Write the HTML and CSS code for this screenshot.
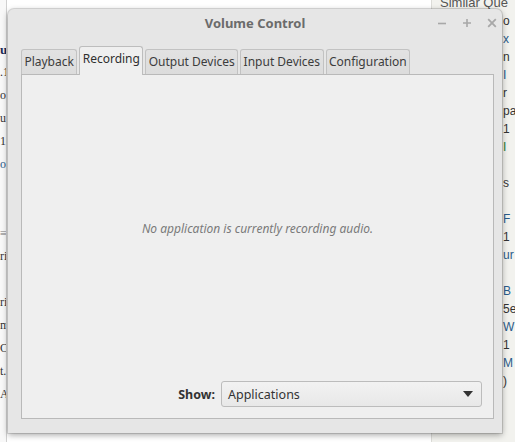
FILE: index.html
```html
<!DOCTYPE html>
<html>
<head>
<meta charset="utf-8">
<link rel="stylesheet" href="styles.css">
</head>
<body>
<div class="page">
  <div class="col-left">
    <div class="ln h">ur</div>
    <div class="ln">.1</div>
    <div class="ln">oi</div>
    <div class="ln">u:</div>
    <div class="ln">1</div>
    <div class="ln blue">ou</div>
    <div class="ln"> </div>
    <div class="ln"> </div>
    <div class="ln rule">≡</div>
    <div class="ln">ri</div>
    <div class="ln"> </div>
    <div class="ln">ri</div>
    <div class="ln">m</div>
    <div class="ln">C</div>
    <div class="ln">t.</div>
    <div class="ln">A</div>
  </div>
  <div class="col-mid"></div>
  <div class="col-right">
    <div class="rl top">Similar Que</div>
    <div class="rl">o</div>
    <div class="rl blue">x</div>
    <div class="rl">n</div>
    <div class="rl blue">I</div>
    <div class="rl">r</div>
    <div class="rl">pa</div>
    <div class="rl">1</div>
    <div class="rl green">I</div>
    <div class="rl"> </div>
    <div class="rl">s</div>
    <div class="rl"> </div>
    <div class="rl blue">F</div>
    <div class="rl">1</div>
    <div class="rl blue">ur</div>
    <div class="rl"> </div>
    <div class="rl blue">B</div>
    <div class="rl">5e</div>
    <div class="rl blue">W</div>
    <div class="rl">1</div>
    <div class="rl blue">M</div>
    <div class="rl">)</div>
  </div>
</div>

<div class="window">
  <div class="titlebar">
    <div class="title">Volume Control</div>
    <div class="controls">
      <svg width="12" height="12" viewBox="0 0 12 12"><path d="M2 6.5h8" stroke="#a8a8a8" stroke-width="1.6"/></svg>
      <svg width="12" height="12" viewBox="0 0 12 12"><path d="M2 6h8M6 2v8" stroke="#a8a8a8" stroke-width="1.6"/></svg>
      <svg width="12" height="12" viewBox="0 0 12 12"><path d="M2.2 2.2l7.6 7.6M9.8 2.2l-7.6 7.6" stroke="#a8a8a8" stroke-width="1.8"/></svg>
    </div>
  </div>
  <div class="notebook">
    <div class="tabs">
      <div class="tab">Playback</div>
      <div class="tab active">Recording</div>
      <div class="tab">Output Devices</div>
      <div class="tab">Input Devices</div>
      <div class="tab">Configuration</div>
    </div>
    <div class="panel">
      <div class="empty">No application is currently recording audio.</div>
      <div class="showrow">
        <span class="showlabel">Show:</span>
        <div class="combo">
          <span>Applications</span>
          <svg width="10" height="6" viewBox="0 0 10 6"><path d="M0 0h10L5 6z" fill="#333"/></svg>
        </div>
      </div>
    </div>
  </div>
</div>
</body>
</html>
```

FILE: styles.css
```css
html, body {
  margin: 0;
  padding: 0;
}
body {
  width: 515px;
  height: 442px;
  overflow: hidden;
  position: relative;
  background: #f4f4f2;
  font-family: "Noto Sans", "DejaVu Sans", sans-serif;
}
.page {
  display: flex;
  height: 442px;
}
.col-left {
  width: 6px;
  background: #f8f8f8;
  border-right: 1px solid #d0d0d0;
  overflow: hidden;
  padding-top: 38px;
  font-family: "Liberation Serif", serif;
  font-size: 12px;
  color: #333;
}
.col-left .ln {
  height: 23px;
  line-height: 23px;
  white-space: nowrap;
}
.col-left .h { font-weight: bold; color: #1a2b5a; font-size: 13px; }
.col-left .rule { color: #777; }
.col-mid {
  flex: 1;
  background: #ffffff;
}
.col-right {
  width: 83px;
  background: #f2f2ee;
  border-left: 1px solid #dcdcd8;
  overflow: hidden;
  font-family: "Liberation Sans", sans-serif;
  font-size: 12px;
  color: #333;
}
.col-right .rl {
  height: 18px;
  line-height: 18px;
  white-space: nowrap;
  padding-left: 71px;
}
.col-right .top {
  margin-top: -6px;
  padding-left: 8px;
  color: #555;
  font-size: 13px;
}
.blue { color: #2a5c8a; }
.green { color: #2e7d32; }

.window {
  position: absolute;
  left: 8px;
  top: 9px;
  width: 494px;
  height: 424px;
  background: #e6e6e6;
  border-radius: 6px 6px 0 0;
  box-shadow: 0 0 0 1px rgba(0,0,0,0.12), 0 2px 6px rgba(0,0,0,0.35);
  display: flex;
  flex-direction: column;
}
.titlebar {
  height: 28px;
  display: flex;
  align-items: center;
  justify-content: center;
  position: relative;
}
.title {
  font-weight: bold;
  font-size: 13px;
  color: #6b6b6b;
}
.controls {
  position: absolute;
  right: 4px;
  top: 8px;
  display: flex;
  gap: 13px;
}
.notebook {
  flex: 1;
  display: flex;
  flex-direction: column;
  padding: 9px 8px 14px 13px;
}
.tabs {
  display: flex;
  align-items: flex-end;
  gap: 2px;
  height: 28px;
  position: relative;
  z-index: 1;
}
.tab {
  height: 25px;
  line-height: 24px;
  padding: 0 2.4px;
  font-size: 12px;
  color: #3c3c3c;
  background: linear-gradient(#e2e2e2, #dcdcdc);
  border: 1px solid #c2c2c2;
  border-bottom: none;
  border-radius: 3px 3px 0 0;
  box-sizing: border-box;
}
.tab.active {
  height: 29px;
  line-height: 24px;
  background: #efefef;
  border-color: #bdbdbd;
  margin-bottom: -1px;
  color: #2f2f2f;
}
.panel {
  flex: 1;
  background: #efefef;
  border: 1px solid #b9b9b9;
  display: flex;
  flex-direction: column;
}
.empty {
  flex: 1;
  display: flex;
  align-items: center;
  justify-content: center;
  font-style: italic;
  font-size: 12px;
  color: #7a7a7a;
}
.showrow {
  display: flex;
  align-items: center;
  justify-content: flex-end;
  gap: 6px;
  padding: 0 11px 11px 0;
}
.showlabel {
  font-weight: bold;
  font-size: 12.5px;
  color: #333;
}
.combo {
  width: 261px;
  height: 26px;
  box-sizing: border-box;
  border: 1px solid #bcbcbc;
  border-radius: 3px;
  background: linear-gradient(#f2f2f2, #e8e8e8);
  display: flex;
  align-items: center;
  justify-content: space-between;
  padding: 0 8px 0 6px;
  font-size: 12.5px;
  color: #333;
}
```
